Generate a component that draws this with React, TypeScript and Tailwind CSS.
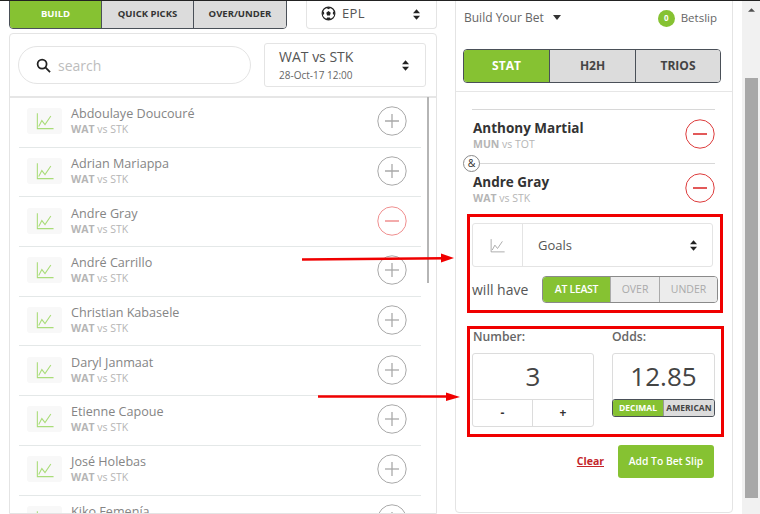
import React from "react";

const players = ["Abdoulaye Doucouré","Adrian Mariappa","Andre Gray","André Carrillo","Christian Kabasele","Daryl Janmaat","Etienne Capoue","José Holebas","Kiko Femenía"];

function Chart({ className }: { className: string }) {
  return (
    <svg viewBox="0 0 20 20" className={className} fill="none" stroke="currentColor" strokeWidth="1.2">
      <path d="M1.5 1.5V18.5H19.500" />
      <path d="M3 16L6.5 9.5L10 14L16.5 4.5" />
    </svg>
  );
}

function Updown({ className = "" }: { className?: string }) {
  return (
    <svg viewBox="0 0 8 12" className={`w-[7px] h-[11px] ${className}`} fill="#222">
      <path d="M4 0L8 4.5H0Z" />
      <path d="M4 12L8 7.5H0Z" />
    </svg>
  );
}

function CircleBtn({ minus, faded, className = "" }: { minus?: boolean; faded?: boolean; className?: string }) {
  const color = minus ? (faded ? "#ef8f8f" : "#dd3c3c") : "#a9a9a9";
  return (
    <svg viewBox="0 0 30 30" className={`w-[30px] h-[30px] shrink-0 ${className}`} fill="none" stroke={color} strokeWidth="1">
      <circle cx="15" cy="15" r="14.2" />
      <path d="M8 15H22" strokeWidth={minus ? 1.7 : 1.3} />
      {!minus && <path d="M15 8V22" strokeWidth="1.3" />}
    </svg>
  );
}

function Row({ name }: { name: string }) {
  return (
    <div className="h-[49.7px] shrink-0 ml-[9px] w-[402px] flex items-center pl-[8px] pr-[14px] pb-[2px] border-b border-[#e4e8e8]">
      <div className="w-[35px] h-[26px] rounded-[3px] bg-[#f8f8f8] flex items-center justify-center">
        <Chart className="w-[18px] h-[18px] text-[#a9dc78]" />
      </div>
      <div className="ml-[9px] flex-1 min-w-0">
        <div className="text-[12.6px] leading-[17px] text-[#858585]">{name}</div>
        <div className="text-[10.5px] leading-[15px] text-[#b5b5b5]"><b className="font-bold">WAT</b> vs STK</div>
      </div>
      <CircleBtn minus={name === "Andre Gray"} faded />
    </div>
  );
}

export default function App() {
  return (
    <div className="w-[760px] h-[514px] overflow-hidden relative flex bg-white text-[#444] font-['Open_Sans','Liberation_Sans',sans-serif] border-t border-[#222]">
      <div className="w-[428px] ml-[9px] mr-[1px] shrink-0 flex flex-col">
        <div className="flex justify-between h-[29px] -mt-px">
          <div className="w-[278px] h-[29px] flex rounded-b-[4px] border border-[#4a5058] overflow-hidden text-[9.5px] font-bold">
            <div className="w-[91px] bg-[#86c232] text-white flex items-center justify-center">BUILD</div>
            <div className="w-[92px] bg-[#dcdcdc] border-l border-[#4a5058] flex items-center justify-center text-[#333]">QUICK PICKS</div>
            <div className="flex-1 bg-[#dcdcdc] border-l border-[#4a5058] flex items-center justify-center text-[#333]">OVER/UNDER</div>
          </div>
          <div className="w-[131px] h-[29px] border border-t-0 border-[#e4e4e4] rounded-b-[4px] flex items-center pl-[14px] pr-[16px] text-[13px] text-[#555]">
            <svg viewBox="0 0 16 16" className="w-[15px] h-[15px] mr-[6px] -mt-[2px]">
              <circle cx="8" cy="8" r="6.8" fill="#fff" stroke="#222" strokeWidth="1.2" />
              <path d="M8 5.4L10.4 7.2L9.500 10H6.500L5.600 7.2Z M8 1.2L10.2 2.2L8 3.4L5.8 2.2Z M14.6 6.5L14.4 9.8L12.6 8.4L12.8 5.8Z M1.4 6.5L1.6 9.8L3.4 8.4L3.2 5.8Z M5.400 14L6.600 12.200H9.400L10.600 14L8 14.800Z" fill="#222" />
            </svg>
            <span className="flex-1 tracking-[0.4px]">EPL</span>
            <Updown />
          </div>
        </div>
        <div className="mt-[4px] flex-1 min-h-0 border border-[#e4e4e4] rounded-t-[4px] flex flex-col overflow-hidden">
          <div className="h-[64px] shrink-0 flex items-center pl-[8px] pr-[10px] border-b-2 border-[#e6e6e6]">
            <div className="w-[233px] h-[38px] border border-[#e4e4e4] rounded-full flex items-center pl-[17px] text-[14px] text-[#bdbdbd]">
              <svg viewBox="0 0 16 16" className="w-[15px] h-[15px] mr-[7px]" fill="none" stroke="#222" strokeWidth="1.9">
                <circle cx="6.5" cy="6.5" r="4.8" />
                <path d="M10 10L15 15" />
              </svg>
              search
            </div>
            <div className="ml-auto w-[162px] h-[44px] border border-[#e4e4e4] rounded-[3px] flex items-center pl-[14px] pr-[16px]">
              <div className="flex-1">
                <div className="text-[14px] leading-[20px] text-[#555]">WAT vs STK</div>
                <div className="text-[10px] leading-[16px] text-[#666]">28-Oct-17 12:00</div>
              </div>
              <Updown />
            </div>
          </div>
          <div className="flex-1 min-h-0 flex">
            <div className="w-[417px] shrink-0 flex flex-col overflow-hidden">
              {players.map((p) => <Row key={p} name={p} />)}
            </div>
            <div className="w-[2px] h-[186px] -mt-px bg-[#b5b5b5]" />
          </div>
        </div>
      </div>

      <div className="w-[278px] ml-[17px] shrink-0 h-[513px] -mt-px border border-[#e4e4e4] rounded-b-[4px] flex flex-col">
        <div className="h-[34px] flex items-center pl-[8px] pr-[15px] text-[12px] text-[#666]">
          <span>Build Your Bet</span>
          <svg viewBox="0 0 8 5" className="w-[8px] h-[5px] ml-[9px] -mt-[2px]" fill="#333"><path d="M0 0H8L4 5Z" /></svg>
          <span className="ml-auto w-[17px] h-[17px] rounded-full bg-[#86c232] text-white text-[8px] font-bold flex items-center justify-center">0</span>
          <span className="ml-[6px] text-[11.500px]">Betslip</span>
        </div>
        <div className="ml-[7px] mt-[14px] h-[34px] w-[258px] flex rounded-[4px] border border-[#4a5058] overflow-hidden text-[12px] font-bold">
          <div className="w-[85px] bg-[#86c232] text-white flex items-center justify-center">STAT</div>
          <div className="w-[86px] bg-[#dcdcdc] border-l border-[#4a5058] flex items-center justify-center text-[#444]">H2H</div>
          <div className="flex-1 bg-[#dcdcdc] border-l border-[#4a5058] flex items-center justify-center text-[#444]">TRIOS</div>
        </div>
        <div className="mt-[8px] h-px bg-[#e6e6e6]" />
        <div className="ml-[16px] mt-[17px] w-[243px]">
          <div className="h-[54px] border-t border-[#d8d8d8] flex items-center pl-[1px]">
            <div className="flex-1 -mt-[2px]">
              <div className="text-[13.5px] leading-[18px] font-bold text-[#333]">Anthony Martial</div>
              <div className="text-[10.5px] leading-[15px] text-[#b5b5b5]"><b>MUN</b> vs TOT</div>
            </div>
            <CircleBtn minus className="-mt-[6px]" />
          </div>
          <div className="h-[51px] border-t border-[#d8d8d8] flex items-center pl-[1px] relative">
            <span className="absolute left-[-9px] top-[-9px] w-[17px] h-[17px] rounded-full border border-[#8a8a8a] bg-white text-[10.5px] text-[#333] flex items-center justify-center">&amp;</span>
            <div className="flex-1">
              <div className="text-[13.5px] leading-[18px] font-bold text-[#333]">Andre Gray</div>
              <div className="text-[10.5px] leading-[15px] text-[#b5b5b5]"><b>WAT</b> vs STK</div>
            </div>
            <CircleBtn minus className="-mt-[3px]" />
          </div>
        </div>
        <div className="ml-[11px] w-[256px] h-[99px] border-[3px] border-[#f00000] px-[2px] pt-[6px]">
          <div className="w-[241px] h-[44px] border border-[#e4e4e4] rounded-[3px] flex items-center">
            <div className="w-[50px] h-full border-r border-[#e4e4e4] flex items-center justify-center">
              <Chart className="w-[15px] h-[15px] text-[#a5a5a5]" />
            </div>
            <span className="ml-[15px] mt-[1px] flex-1 text-[13px] text-[#555]">Goals</span>
            <Updown className="mr-[15px]" />
          </div>
          <div className="mt-[9px] flex items-center">
            <span className="text-[14px] text-[#555]">will have</span>
            <div className="ml-auto w-[176px] h-[27px] flex rounded-[4px] border border-[#8a8a8a] overflow-hidden text-[10.5px]">
              <div className="w-[67px] bg-[#86c232] text-white font-semibold tracking-[-0.3px] flex items-center justify-center">AT LEAST</div>
              <div className="w-[49px] bg-[#ececec] border-l border-[#aaa] text-[#aaa] flex items-center justify-center">OVER</div>
              <div className="flex-1 bg-[#ececec] border-l border-[#aaa] text-[#aaa] flex items-center justify-center">UNDER</div>
            </div>
          </div>
        </div>
        <div className="ml-[11px] mt-[13px] w-[257px] h-[111px] border-[3px] border-[#f00000] pl-[2px] flex">
          <div className="w-[122px]">
            <div className="h-[21px] pl-[1px] text-[12.2px] font-semibold text-[#666] leading-[16px]">Number:</div>
            <div className="mt-[3px] h-[74px] border border-[#dcdcdc] rounded-[3px] flex flex-col">
              <div className="h-[46px] border-b border-[#dcdcdc] flex items-center justify-center text-[26px] text-[#444]">3</div>
              <div className="flex-1 flex text-[12px] font-bold text-[#333]">
                <div className="w-[60px] border-r border-[#dcdcdc] flex items-center justify-center">-</div>
                <div className="flex-1 flex items-center justify-center">+</div>
              </div>
            </div>
          </div>
          <div className="ml-[18px] w-[103px]">
            <div className="h-[21px] text-[12.2px] font-semibold text-[#666] leading-[16px]">Odds:</div>
            <div className="mt-[3px] h-[64px] border border-[#dcdcdc] rounded-[3px] flex flex-col">
              <div className="h-[45px] flex items-center justify-center text-[26px] text-[#444]">12.85</div>
              <div className="flex-1 -mx-px -mb-px flex rounded-[3px] border border-[#4a5058] overflow-hidden text-[8.5px] font-bold">
                <div className="w-[50px] bg-[#86c232] text-white flex items-center justify-center">DECIMAL</div>
                <div className="flex-1 bg-[#dcdcdc] border-l border-[#999] text-[#444] flex items-center justify-center">AMERICAN</div>
              </div>
            </div>
          </div>
        </div>
        <div className="mt-[8px] flex items-center justify-end pr-[18px]">
          <span className="text-[10.5px] font-bold text-[#c4262a] underline mr-[14px]">Clear</span>
          <div className="w-[96px] h-[33px] bg-[#86c232] rounded-[3px] text-white text-[10.3px] font-semibold flex items-center justify-center">Add To Bet Slip</div>
        </div>
      </div>

      <div className="ml-[9px] w-[18px] shrink-0 -mt-px h-[514px] bg-[#f1f1f1] flex flex-col items-center">
        <svg viewBox="0 0 8 4" className="w-[7px] h-[4px] mt-[8px]" fill="#505050"><path d="M4 0L8 4H0Z" /></svg>
        <div className="mt-[66px] w-[13px] h-[420px] bg-[#a8a8a8]" />
      </div>

      <svg className="absolute left-0 top-[-1px] w-[760px] h-[514px] pointer-events-none" viewBox="0 0 760 514">
        <path d="M302 259.500L445 258.300" stroke="#f00000" strokeWidth="2.4" />
        <path d="M441 253.500L454 258L441 262.500Z" fill="#f00000" />
        <path d="M318 396.500H448" stroke="#f00000" strokeWidth="2.4" />
        <path d="M446 392.500L460 397L446 401Z" fill="#f00000" />
      </svg>
    </div>
  );
}
